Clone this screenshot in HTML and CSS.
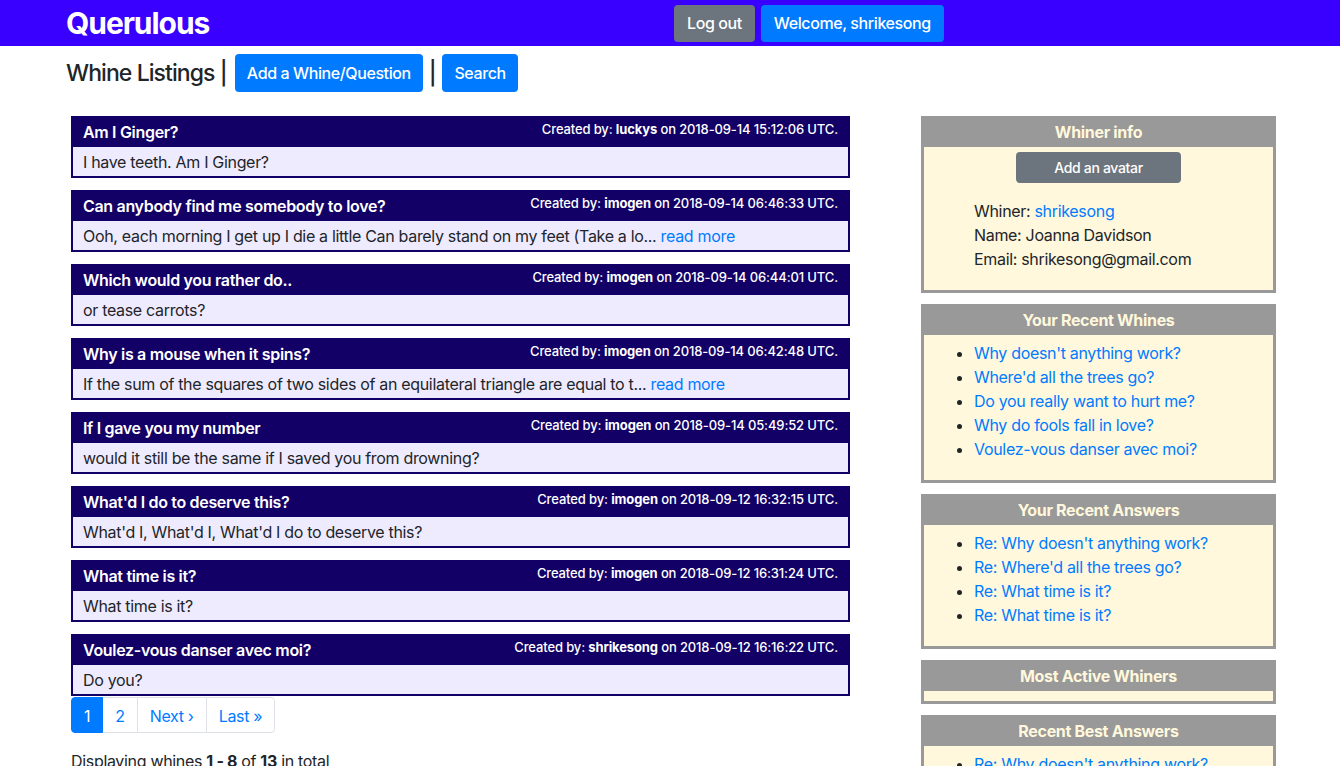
FILE: index.html
```html
<!DOCTYPE html>
<html>
<head>
<meta charset="utf-8">
<title>Querulous</title>
<link rel="stylesheet" href="styles.css">
</head>
<body>
<header class="navbar">
  <a class="brand" href="#">Querulous</a>
  <div class="nav-buttons">
    <a class="btn btn-gray" href="#">Log out</a>
    <a class="btn btn-blue" href="#">Welcome, shrikesong</a>
  </div>
</header>
<main class="page">
  <div class="title-row">
    <h1 class="page-title">Whine Listings |</h1>
    <a class="btn btn-blue" href="#">Add a Whine/Question</a>
    <span class="pipe">|</span>
    <a class="btn btn-blue" href="#">Search</a>
  </div>
  <div class="layout">
    <section class="whines">
      <article class="whine">
        <div class="whine-head"><span class="whine-title">Am I Ginger?</span><span class="meta">Created by: <b>luckys</b> on 2018-09-14 15:12:06 UTC.</span></div>
        <div class="whine-body">I have teeth. Am I Ginger?</div>
      </article>
      <article class="whine">
        <div class="whine-head"><span class="whine-title">Can anybody find me somebody to love?</span><span class="meta">Created by: <b>imogen</b> on 2018-09-14 06:46:33 UTC.</span></div>
        <div class="whine-body">Ooh, each morning I get up I die a little Can barely stand on my feet (Take a lo... <a href="#">read more</a></div>
      </article>
      <article class="whine">
        <div class="whine-head"><span class="whine-title">Which would you rather do..</span><span class="meta">Created by: <b>imogen</b> on 2018-09-14 06:44:01 UTC.</span></div>
        <div class="whine-body">or tease carrots?</div>
      </article>
      <article class="whine">
        <div class="whine-head"><span class="whine-title">Why is a mouse when it spins?</span><span class="meta">Created by: <b>imogen</b> on 2018-09-14 06:42:48 UTC.</span></div>
        <div class="whine-body">If the sum of the squares of two sides of an equilateral triangle are equal to t... <a href="#">read more</a></div>
      </article>
      <article class="whine">
        <div class="whine-head"><span class="whine-title">If I gave you my number</span><span class="meta">Created by: <b>imogen</b> on 2018-09-14 05:49:52 UTC.</span></div>
        <div class="whine-body">would it still be the same if I saved you from drowning?</div>
      </article>
      <article class="whine">
        <div class="whine-head"><span class="whine-title">What'd I do to deserve this?</span><span class="meta">Created by: <b>imogen</b> on 2018-09-12 16:32:15 UTC.</span></div>
        <div class="whine-body">What'd I, What'd I, What'd I do to deserve this?</div>
      </article>
      <article class="whine">
        <div class="whine-head"><span class="whine-title">What time is it?</span><span class="meta">Created by: <b>imogen</b> on 2018-09-12 16:31:24 UTC.</span></div>
        <div class="whine-body">What time is it?</div>
      </article>
      <article class="whine">
        <div class="whine-head"><span class="whine-title">Voulez-vous danser avec moi?</span><span class="meta">Created by: <b>shrikesong</b> on 2018-09-12 16:16:22 UTC.</span></div>
        <div class="whine-body">Do you?</div>
      </article>
      <nav class="pagination">
        <span class="page-item active">1</span>
        <a class="page-item" href="#">2</a>
        <a class="page-item" href="#">Next ›</a>
        <a class="page-item" href="#">Last »</a>
      </nav>
      <p class="summary">Displaying whines <b>1 - 8</b> of <b>13</b> in total</p>
    </section>
    <aside class="sidebar">
      <div class="panel">
        <div class="panel-head">Whiner info</div>
        <div class="panel-body info-body">
          <a class="btn btn-gray btn-small" href="#">Add an avatar</a>
          <ul class="info-list">
            <li>Whiner: <a href="#">shrikesong</a></li>
            <li>Name: Joanna Davidson</li>
            <li>Email: shrikesong@gmail.com</li>
          </ul>
        </div>
      </div>
      <div class="panel">
        <div class="panel-head">Your Recent Whines</div>
        <div class="panel-body list-body">
          <ul>
            <li><a href="#">Why doesn't anything work?</a></li>
            <li><a href="#">Where'd all the trees go?</a></li>
            <li><a href="#">Do you really want to hurt me?</a></li>
            <li><a href="#">Why do fools fall in love?</a></li>
            <li><a href="#">Voulez-vous danser avec moi?</a></li>
          </ul>
        </div>
      </div>
      <div class="panel">
        <div class="panel-head">Your Recent Answers</div>
        <div class="panel-body list-body">
          <ul>
            <li><a href="#">Re: Why doesn't anything work?</a></li>
            <li><a href="#">Re: Where'd all the trees go?</a></li>
            <li><a href="#">Re: What time is it?</a></li>
            <li><a href="#">Re: What time is it?</a></li>
          </ul>
        </div>
      </div>
      <div class="panel">
        <div class="panel-head">Most Active Whiners</div>
        <div class="panel-body empty-body"></div>
      </div>
      <div class="panel">
        <div class="panel-head">Recent Best Answers</div>
        <div class="panel-body list-body">
          <ul>
            <li><a href="#">Re: Why doesn't anything work?</a></li>
            <li><a href="#">Re: Where'd all the trees go?</a></li>
          </ul>
        </div>
      </div>
    </aside>
  </div>
</main>
</body>
</html>
```
FILE: styles.css
```css
* { box-sizing: border-box; }
html, body { margin: 0; padding: 0; }
body {
  font-family: Inter, "Noto Sans", "Liberation Sans", sans-serif;
  font-size: 16px;
  line-height: 24px;
  letter-spacing: -0.02em;
  color: #212529;
  background: #fff;
  overflow: hidden;
  height: 766px;
}
a { color: #007bff; text-decoration: none; }

.navbar {
  height: 46px;
  background: #3a00ff;
  display: flex;
  align-items: center;
  padding-left: 66px;
}
.brand {
  display: block;
  width: 608px;
  color: #fff;
  font-size: 30px;
  font-weight: 700;
  letter-spacing: -0.035em;
  line-height: 46px;
}
.nav-buttons {
  display: flex;
  gap: 6px;
}
.btn {
  display: inline-block;
  color: #fff;
  border-radius: 4px;
  padding: 6px 12px;
  font-size: 16px;
  line-height: 24px;
  white-space: nowrap;
}
.navbar .btn { height: 37px; padding: 6px 13px; font-weight: 500; letter-spacing: -0.025em; }
.btn-gray { background: #6c757d; }
.btn-blue { background: #007bff; }

.page { padding-left: 66px; }
.title-row {
  display: flex;
  align-items: center;
  height: 38px;
  margin-top: 8px;
}
.title-row .btn { height: 38px; padding: 7px 12px; font-weight: 500; letter-spacing: -0.025em; }
.page-title {
  margin: 0 8px 0 0;
  font-size: 23px;
  font-weight: 500;
  letter-spacing: -0.04em;
  line-height: 30px;
}
.pipe { font-size: 23px; font-weight: 500; margin: 0 6px 0 6px; }

.layout {
  display: grid;
  grid-template-columns: 779px 355px;
  gap: 71px;
  margin-left: 5px;
  margin-top: 24px;
}

.whine {
  border: 2px solid #120066;
  margin-bottom: 12px;
}
.whine-head {
  background: #120066;
  color: #fff;
  height: 29px;
  padding: 0 10px;
  display: flex;
  justify-content: space-between;
  align-items: flex-start;
}
.whine-title { font-weight: 600; line-height: 29px; }
.meta { font-size: 13px; font-weight: 500; line-height: 23px; letter-spacing: -0.01em; }
.meta b { font-weight: 700; }
.whine-body {
  background: #efebff;
  height: 29px;
  padding: 3px 10px 0;
  line-height: 25px;
  white-space: nowrap;
  overflow: hidden;
}

.pagination {
  display: flex;
  margin-top: -11px;
}
.page-item {
  display: block;
  height: 36px;
  padding: 6px 12px;
  line-height: 24px;
  border: 1px solid #dee2e6;
  margin-left: -1px;
  color: #007bff;
  background: #fff;
}
.page-item:first-child { margin-left: 0; border-radius: 4px 0 0 4px; }
.page-item:last-child { border-radius: 0 4px 4px 0; }
.page-item.active { background: #007bff; border-color: #007bff; color: #fff; position: relative; z-index: 1; }
.summary { margin: 16px 0 0; }

.panel {
  border: 3px solid #999;
  margin-bottom: 11px;
}
.panel-head {
  background: #999;
  color: #fff8dc;
  text-align: center;
  font-weight: 700;
  height: 28px;
  line-height: 26px;
}
.panel-body { background: #fff8dc; }
.info-body {
  padding-top: 5px;
  padding-bottom: 19px;
  text-align: center;
}
.btn-small {
  font-size: 14px;
  line-height: 21px;
  width: 165px;
  height: 31px;
  padding: 5px 8px;
  font-weight: 500;
}
.info-list {
  list-style: none;
  text-align: left;
  margin: 16px 0 0;
  padding-left: 50px;
}
.list-body { padding: 6px 0 19px; }
.list-body ul { margin: 0; padding-left: 50px; }
.empty-body { height: 10px; }
```
